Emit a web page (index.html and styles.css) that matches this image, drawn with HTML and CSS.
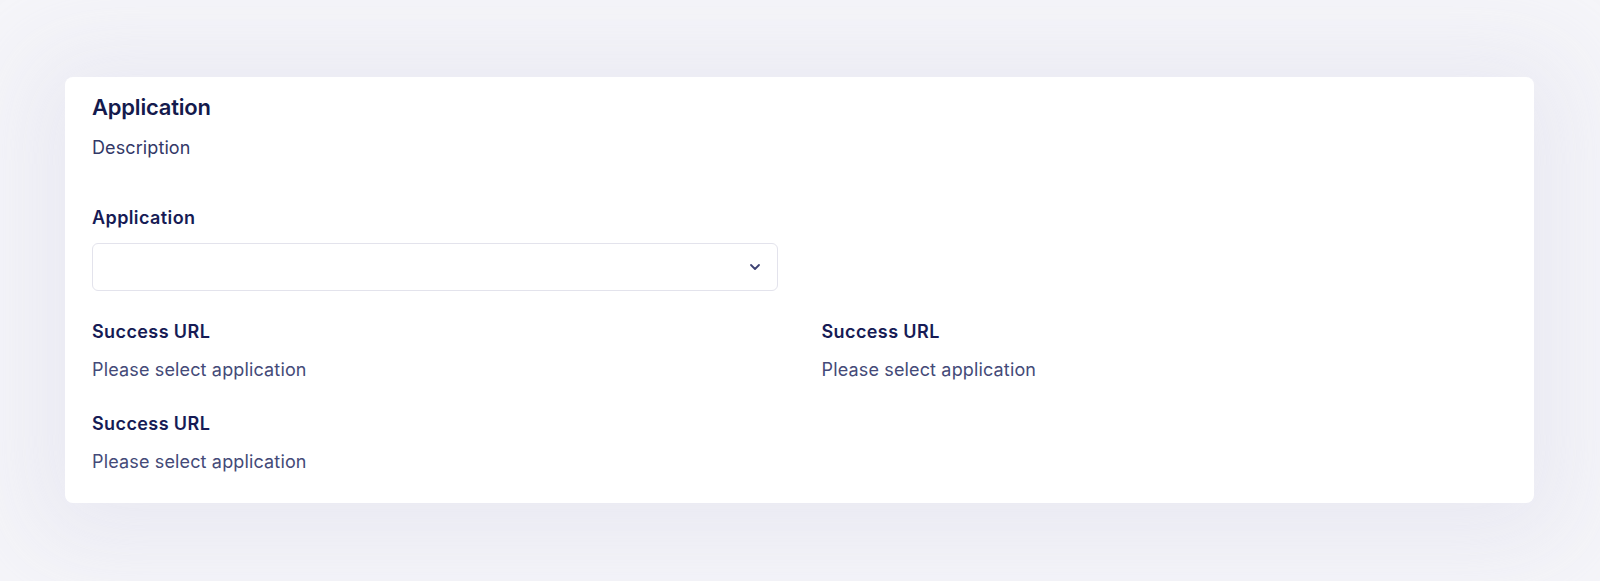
FILE: index.html
```html
<!DOCTYPE html>
<html lang="en">
<head>
<meta charset="utf-8">
<title>Application</title>
<link rel="stylesheet" href="styles.css">
</head>
<body>
<main class="page">
  <section class="card">
    <h2 class="card-title">Application</h2>
    <p class="card-desc">Description</p>
    <div class="grid">
      <div class="field field-select">
        <label class="field-label">Application</label>
        <div class="select">
          <svg class="chevron" width="12" height="8" viewBox="0 0 12 8"><path d="M2 2l4 4 4-4" fill="none" stroke="#3d4273" stroke-width="1.8" stroke-linecap="round" stroke-linejoin="round"/></svg>
        </div>
      </div>
      <div class="field">
        <div class="field-label">Success URL</div>
        <div class="field-value">Please select application</div>
      </div>
      <div class="field">
        <div class="field-label">Success URL</div>
        <div class="field-value">Please select application</div>
      </div>
      <div class="field">
        <div class="field-label">Success URL</div>
        <div class="field-value">Please select application</div>
      </div>
    </div>
  </section>
</main>
</body>
</html>
```
FILE: styles.css
```css
html, body {
  margin: 0;
  padding: 0;
}
html {
  background: #f5f5f9;
  min-height: 100%;
}
body {
  min-height: 100vh;
  font-family: Inter, "Noto Sans", sans-serif;
  color: #161b4f;
}
.page {
  padding: 77px 66px 78px 65px;
}
.card {
  background: #ffffff;
  border-radius: 8px;
  padding: 15px 27px 28px 27px;
  box-shadow: 0 10px 90px 30px rgba(228, 228, 240, 0.7);
}
.card-title {
  margin: 0;
  font-size: 22px;
  line-height: 30px;
  font-weight: 600;
  letter-spacing: -0.2px;
  color: #141a4d;
}
.card-desc {
  margin: 13px 0 0;
  font-size: 18px;
  line-height: 26px;
  font-weight: 400;
  letter-spacing: 0.1px;
  color: #333867;
}
.grid {
  margin-top: 44px;
  display: grid;
  grid-template-columns: 1fr 1fr;
  column-gap: 44px;
  row-gap: 28px;
}
.field-select {
  grid-column: 1;
}
.field-select + .field {
  grid-column: 1;
}
.field-label {
  display: block;
  font-size: 18px;
  line-height: 26px;
  font-weight: 600;
  letter-spacing: 0.4px;
  color: #161b55;
}
.field-select .field-label {
  margin-bottom: 12px;
}
.select {
  height: 46px;
  border: 1px solid #e3e3ec;
  border-radius: 6px;
  display: flex;
  align-items: center;
  justify-content: flex-end;
  padding: 0 16px;
}
.field-value {
  margin-top: 12px;
  font-size: 18px;
  line-height: 26px;
  font-weight: 400;
  letter-spacing: 0.15px;
  color: #444a78;
}
```
